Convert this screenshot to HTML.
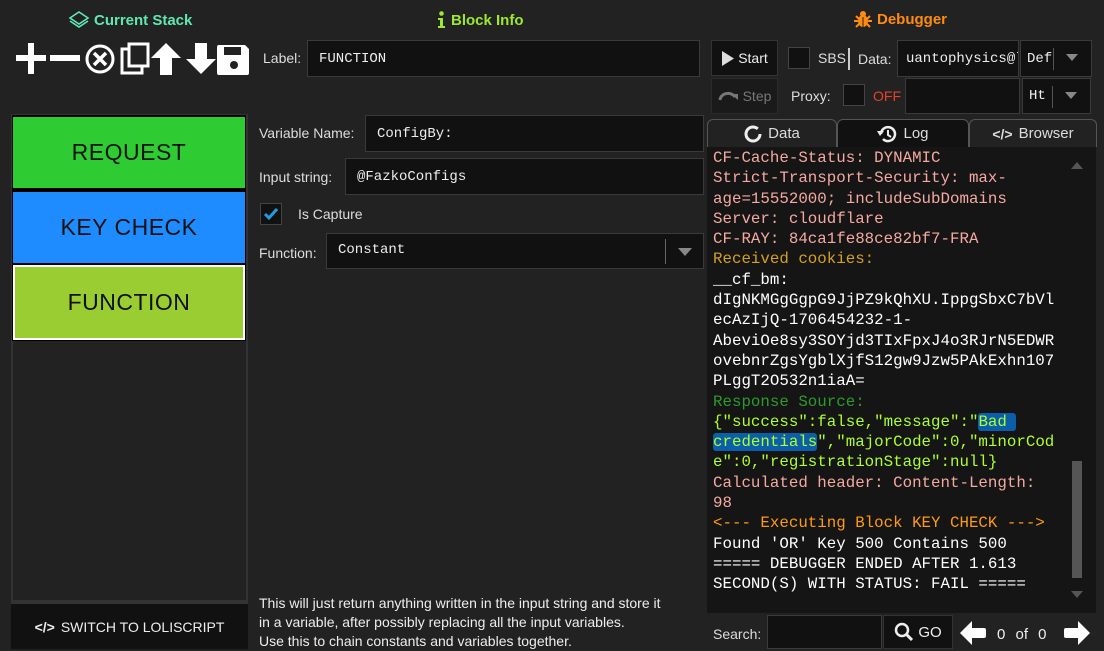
<!DOCTYPE html>
<html><head><meta charset="utf-8"><style>
*{box-sizing:border-box;margin:0;padding:0}
body{width:1104px;height:649px;background:#222;overflow:hidden;position:relative;font-family:"Liberation Sans",sans-serif;color:#ddd;font-size:14px}
.a{position:absolute}
.inp{position:absolute;background:#111;border:1px solid #3a3a3a;color:#eee;font-family:"Liberation Mono",monospace;font-size:14px;padding-left:11px;display:flex;align-items:center}
.lbl{position:absolute;font-size:14px;color:#ddd}
.hdr{position:absolute;font-weight:bold;font-size:15px}
.blk{position:absolute;left:13px;width:232px;display:flex;align-items:center;justify-content:center;font-size:23px;color:#111;letter-spacing:0.5px;font-weight:300}
.cb{position:absolute;width:22px;height:22px;background:#111;border:1px solid #444}
.log{position:absolute;left:707px;top:147px;width:389px;height:466px;background:#151515;font-family:"Liberation Mono",monospace;font-size:15.8px;line-height:20.3px;padding:1px 0 0 6px;overflow:hidden;white-space:pre}
.pk{color:#f5a9a0}.gd{color:#d4a020}.wh{color:#fff}.gr{color:#2d9a2d}.yg{color:#adff2f}.or{color:#ff9a10}
.hl{background:#0b5ea8;border-radius:3px}
.tab{position:absolute;top:119px;height:28px;border:1px solid #555;border-bottom:none;border-radius:6px 6px 0 0;background:#222;color:#ddd;font-size:15px;display:flex;align-items:center;justify-content:center;gap:6px}
</style></head><body>

<div class="hdr" style="left:68px;top:11px;color:#5ee8b0;display:flex;align-items:center;gap:4px">
<svg width="22" height="18" viewBox="0 0 22 18"><path d="M11 1 L20 7 L11 13 L2 7 Z" fill="none" stroke="#5ee8b0" stroke-width="1.6"/><path d="M2 10 L11 16 L20 10" fill="none" stroke="#5ee8b0" stroke-width="1.6"/></svg>Current Stack</div>
<div class="hdr" style="left:437px;top:11px;color:#9be82e;display:flex;align-items:center;gap:5px">
<svg width="9" height="18" viewBox="0 0 9 18"><circle cx="4.5" cy="2.5" r="2.3" fill="#9be82e"/><path d="M1 7h5v8h2v2H1v-2h2V9H1z" fill="#9be82e"/></svg>Block Info</div>
<div class="hdr" style="left:853px;top:10px;color:#ff8c10;display:flex;align-items:center;gap:4px">
<svg width="20" height="19" viewBox="0 0 20 19"><ellipse cx="10" cy="11" rx="5" ry="6" fill="#ff8c10"/><circle cx="10" cy="4" r="3" fill="#ff8c10"/><path d="M3 6l3 3M17 6l-3 3M1 11h4M19 11h-4M3 17l3-3M17 17l-3-3" stroke="#ff8c10" stroke-width="2"/><path d="M10 7v10" stroke="#222" stroke-width="1"/></svg>Debugger</div>

<svg class="a" style="left:14px;top:42px" width="238" height="34" viewBox="0 0 238 34">
<path d="M2 16h30M17 1v31" stroke="#fff" stroke-width="6"/>
<path d="M36 16h30" stroke="#fff" stroke-width="6"/>
<circle cx="86" cy="17" r="13" fill="none" stroke="#fff" stroke-width="3"/><path d="M80 11l12 12M92 11l-12 12" stroke="#fff" stroke-width="3.5"/>
<rect x="108" y="7" width="20" height="24" fill="none" stroke="#fff" stroke-width="3"/><rect x="115" y="2" width="19" height="22" fill="#222" stroke="#fff" stroke-width="3"/>
<path d="M152 1 L167 16 L158 16 L158 33 L146 33 L146 16 L137 16 Z" fill="#fff"/>
<path d="M181 1 L193 1 L193 17 L202 17 L187 32 L172 17 L181 17 Z" fill="#fff"/>
<path d="M205 3 h26 l4 4 v24 a2 2 0 0 1 -2 2 h-28 a2 2 0 0 1 -2 -2 v-26 a2 2 0 0 1 2 -2z" fill="#fff"/><rect x="210" y="5" width="17" height="8" fill="#222"/><circle cx="220" cy="23" r="4" fill="#222"/>
</svg>

<div class="a" style="left:11px;top:114px;width:237px;height:488px;border:2px solid #333;background:#222"></div>
<div class="a" style="left:12px;top:115px;width:234px;height:226px;background:#000"></div>
<div class="blk" style="top:117px;height:71px;background:#2ecc32">REQUEST</div>
<div class="blk" style="top:192px;height:71px;background:#1e8cff">KEY CHECK</div>
<div class="blk" style="top:265px;height:75px;background:#9acd32;border:2px solid #fff">FUNCTION</div>
<div class="a" style="left:11px;top:602px;width:237px;height:47px;background:#111;border-top:2px solid #333;color:#eee;font-size:14px;display:flex;align-items:center;justify-content:center;gap:6px"><b style="font-size:14px">&lt;/&gt;</b>SWITCH TO LOLISCRIPT</div>

<div class="lbl" style="left:263px;top:50px">Label:</div>
<div class="inp" style="left:307px;top:40px;width:393px;height:37px">FUNCTION</div>
<div class="lbl" style="left:259px;top:125px">Variable Name:</div>
<div class="inp" style="left:365px;top:115px;width:339px;height:37px">ConfigBy:</div>
<div class="lbl" style="left:259px;top:169px">Input string:</div>
<div class="inp" style="left:345px;top:158px;width:359px;height:37px">@FazkoConfigs</div>
<div class="cb" style="left:260px;top:203px"><svg width="20" height="20" viewBox="0 0 20 20"><path d="M4 10l4 4 8-9" stroke="#1e9ee0" stroke-width="3" fill="none"/></svg></div>
<div class="lbl" style="left:298px;top:206px">Is Capture</div>
<div class="lbl" style="left:259px;top:245px">Function:</div>
<div class="inp" style="left:326px;top:233px;width:378px;height:36px;align-items:flex-start;padding-top:8px">Constant</div>
<div class="a" style="left:665px;top:239px;width:1px;height:25px;background:#666"></div>
<svg class="a" style="left:678px;top:248px" width="14" height="8"><path d="M0 0h14L7 8z" fill="#888"/></svg>
<div class="a" style="left:259px;top:594px;font-size:14px;line-height:19px;color:#eee">This will just return anything written in the input string and store it<br>in a variable, after possibly replacing all the input variables.<br>Use this to chain constants and variables together.</div>

<div class="a" style="left:711px;top:40px;width:67px;height:36px;background:#111;border:1px solid #333;display:flex;align-items:center;justify-content:center;gap:4px;color:#eee;font-size:14px"><svg width="13" height="15"><path d="M1 0L13 7.5 1 15z" fill="#ddd"/></svg>Start</div>
<div class="a" style="left:711px;top:78px;width:67px;height:36px;background:#1a1a1a;border:1px solid #2a2a2a;display:flex;align-items:center;justify-content:center;gap:3px;color:#777;font-size:14px"><svg width="22" height="12" viewBox="0 0 22 12"><path d="M2 10a8 7 0 0 1 15-3" stroke="#777" stroke-width="3" fill="none"/><path d="M13 4h7v6z" fill="#777"/></svg>Step</div>
<div class="cb" style="left:788px;top:47px"></div>
<div class="lbl" style="left:818px;top:50px">SBS</div>
<div class="a" style="left:848px;top:48px;width:2px;height:22px;background:#ccc"></div>
<div class="lbl" style="left:858px;top:51px">Data:</div>
<div class="inp" style="left:897px;top:40px;width:122px;height:37px;padding-left:8px;overflow:hidden;white-space:nowrap">uantophysics@l</div>
<div class="inp" style="left:1020px;top:40px;width:72px;height:37px;padding-left:6px">Def</div>
<div class="a" style="left:1053px;top:48px;width:1px;height:22px;background:#555"></div>
<svg class="a" style="left:1066px;top:54px" width="12" height="7"><path d="M0 0h12L6 7z" fill="#888"/></svg>
<div class="lbl" style="left:791px;top:88px">Proxy:</div>
<div class="cb" style="left:843px;top:84px"></div>
<div class="lbl" style="left:873px;top:88px;color:#e8402a">OFF</div>
<div class="inp" style="left:905px;top:78px;width:115px;height:36px"></div>
<div class="inp" style="left:1022px;top:78px;width:69px;height:36px;padding-left:6px">Ht</div>
<div class="a" style="left:1052px;top:86px;width:1px;height:22px;background:#555"></div>
<svg class="a" style="left:1065px;top:92px" width="12" height="7"><path d="M0 0h12L6 7z" fill="#888"/></svg>

<div class="tab" style="left:707px;width:130px"><svg width="18" height="18" viewBox="0 0 18 18"><circle cx="9" cy="9" r="7" fill="none" stroke="#eee" stroke-width="3" stroke-dasharray="38 6"/></svg>Data</div>
<div class="tab" style="left:837px;width:132px;background:#111"><svg width="20" height="18" viewBox="0 0 20 18"><path d="M4 9a7 7 0 1 1 2 5" fill="none" stroke="#eee" stroke-width="2.5"/><path d="M0 7h7L3 12z" fill="#eee" transform="translate(0,-1)"/><path d="M11 5v5l3 2" stroke="#eee" stroke-width="2" fill="none"/></svg>Log</div>
<div class="tab" style="left:969px;width:128px"><b style="font-size:14px">&lt;/&gt;</b>Browser</div>

<div class="log"><span class="pk">CF-Cache-Status: DYNAMIC
Strict-Transport-Security: max-
age=15552000; includeSubDomains
Server: cloudflare
CF-RAY: 84ca1fe88ce82bf7-FRA</span>
<span class="gd">Received cookies:</span>
<span class="wh">__cf_bm:
dIgNKMGgGgpG9JjPZ9kQhXU.IppgSbxC7bVl
ecAzIjQ-1706454232-1-
AbeviOe8sy3SOYjd3TIxFpxJ4o3RJrN5EDWR
ovebnrZgsYgblXjfS12gw9Jzw5PAkExhn107
PLggT2O532n1iaA=</span>
<span class="gr">Response Source:</span>
<span class="yg">{"success":false,"message":"<span class="hl">Bad </span>
<span class="hl">credentials</span>","majorCode":0,"minorCod
e":0,"registrationStage":null}</span>
<span class="pk">Calculated header: Content-Length:
98</span>
<span class="or">&lt;--- Executing Block KEY CHECK ---&gt;</span>
<span class="wh">Found 'OR' Key 500 Contains 500
===== DEBUGGER ENDED AFTER 1.613
SECOND(S) WITH STATUS: FAIL =====</span></div>
<svg class="a" style="left:1071px;top:162px" width="12" height="7"><path d="M6 0L12 7H0z" fill="#555"/></svg>
<div class="a" style="left:1072px;top:461px;width:10px;height:117px;background:#555"></div>
<svg class="a" style="left:1071px;top:591px" width="12" height="7"><path d="M0 0h12L6 7z" fill="#555"/></svg>

<div class="lbl" style="left:713px;top:626px">Search:</div>
<div class="inp" style="left:767px;top:615px;width:115px;height:34px"></div>
<div class="a" style="left:883px;top:615px;width:70px;height:34px;background:#111;border:1px solid #333;display:flex;align-items:center;justify-content:center;gap:4px;color:#eee;font-size:15px"><svg width="20" height="20" viewBox="0 0 20 20"><circle cx="8" cy="8" r="6" fill="none" stroke="#eee" stroke-width="2.5"/><path d="M12 12l6 6" stroke="#eee" stroke-width="3"/></svg>GO</div>
<svg class="a" style="left:960px;top:621px" width="26" height="24" viewBox="0 0 26 24"><path d="M0 12L12 0v7h12a2 2 0 0 1 2 2v6a2 2 0 0 1-2 2H12v7z" fill="#fff"/></svg>
<div class="lbl" style="left:997px;top:626px;font-size:15px;color:#eee;word-spacing:6px">0 of 0</div>
<svg class="a" style="left:1064px;top:621px" width="26" height="24" viewBox="0 0 26 24"><path d="M26 12L14 0v7H2a2 2 0 0 0-2 2v6a2 2 0 0 0 2 2h12v7z" fill="#fff"/></svg>
</body></html>
